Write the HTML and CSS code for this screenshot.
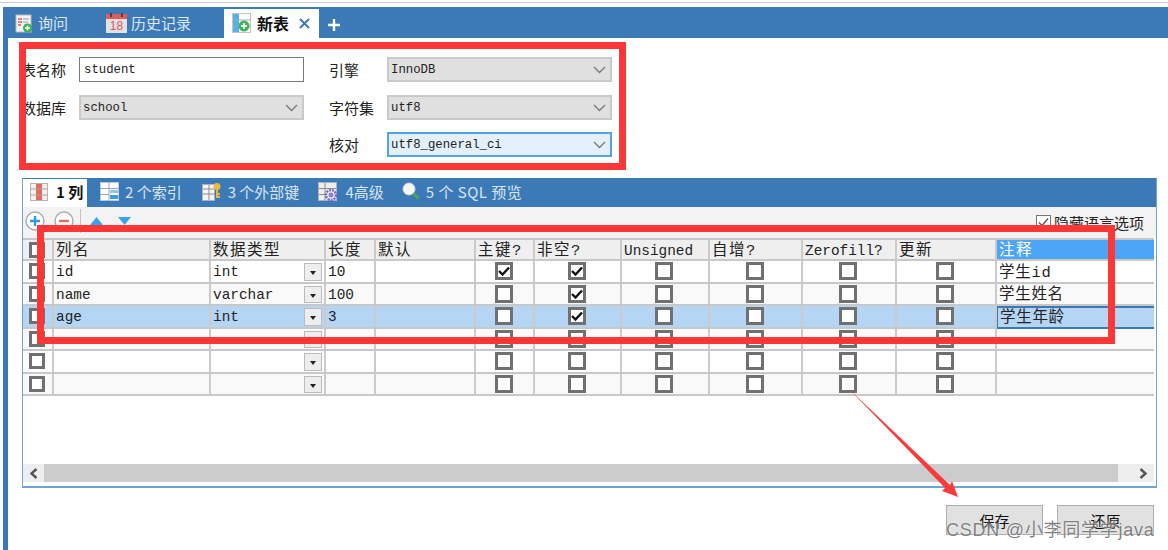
FILE: index.html
```html
<!DOCTYPE html>
<html lang="zh">
<head>
<meta charset="utf-8">
<title>新表</title>
<link rel="stylesheet" href="styles.css">
</head>
<body>
<div class="topline"></div>
<main class="window">
  <nav class="tabbar">
    <div class="tab">
      <svg class="ti" width="18" height="19" viewBox="0 0 18 19"><rect x="1" y="1" width="15" height="17" fill="#f4f4f4" stroke="#b8b8b8"/><path d="M3 5h4M3 8h4M3 11h3" stroke="#e05a5a" stroke-width="1.4"/><path d="M8 5h6M8 8h5" stroke="#999" stroke-width="1.2"/><circle cx="12.5" cy="14" r="4.5" fill="#3fae55"/><path d="M12.500 11.500v5M10 14h5" stroke="#fff" stroke-width="1.500"/></svg>
      <span>询问</span>
    </div>
    <div class="tab tab-cal">
      <svg class="ti" width="21" height="20" viewBox="0 0 21 20"><rect x="0" y="3" width="21" height="17" fill="#e2e2e2"/><rect x="0" y="1" width="21" height="5" fill="#dc5d5d"/><rect x="4" y="0" width="2" height="4" fill="#444"/><rect x="15" y="0" width="2" height="4" fill="#444"/><text x="10.500" y="17" text-anchor="middle" class="cal-num">18</text></svg>
      <span>历史记录</span>
    </div>
    <div class="tab tab-active">
      <svg class="ti" width="19" height="20" viewBox="0 0 19 20"><rect x=".5" y=".5" width="18" height="19" fill="#fff" stroke="#c4c4c4"/><path d="M1 1h6v18H1z" fill="#4db2ea"/><path d="M1 7h17M1 13h17" stroke="#a8a8a8"/><circle cx="12" cy="13" r="5.500" fill="#49b35c"/><path d="M12 10v6M9 13h6" stroke="#fff" stroke-width="1.500"/></svg>
      <b>新表</b>
      <svg class="close" width="11" height="11" viewBox="0 0 11 11"><path d="M1 1l9 9M10 1l-9 9" stroke="#3c7ab7" stroke-width="2"/></svg>
    </div>
    <svg class="plus" width="12" height="12" viewBox="0 0 12 12"><path d="M6 0v12M0 6h12" stroke="#fff" stroke-width="2.400"/></svg>
  </nav>

  <section class="form">
    <label class="lbl">表名称</label>
    <div class="ctl ctl-input">student</div>
    <label class="lbl lbl-2">引擎</label>
    <div class="ctl">InnoDB<svg class="chev" width="13" height="8" viewBox="0 0 13 8"><path d="M1 1l5.500 5.500L12 1" fill="none" stroke="#777" stroke-width="1.300"/></svg></div>
    <label class="lbl">数据库</label>
    <div class="ctl">school<svg class="chev" width="13" height="8" viewBox="0 0 13 8"><path d="M1 1l5.500 5.500L12 1" fill="none" stroke="#777" stroke-width="1.300"/></svg></div>
    <label class="lbl lbl-2">字符集</label>
    <div class="ctl">utf8<svg class="chev" width="13" height="8" viewBox="0 0 13 8"><path d="M1 1l5.500 5.500L12 1" fill="none" stroke="#777" stroke-width="1.300"/></svg></div>
    <label class="lbl lbl-2 lbl-third">核对</label>
    <div class="ctl ctl-focus">utf8_general_ci<svg class="chev" width="13" height="8" viewBox="0 0 13 8"><path d="M1 1l5.500 5.500L12 1" fill="none" stroke="#777" stroke-width="1.300"/></svg></div>
  </section>

  <section class="panel">
    <nav class="subtabs">
      <div class="sub sub-active">
        <svg width="18" height="18" viewBox="0 0 18 18"><rect x=".5" y=".5" width="17" height="17" fill="#f4f0ee" stroke="#b5b5b5"/><rect x="6" y="1" width="6" height="16" fill="#e8685c"/><path d="M1 6h16M1 12h16" stroke="#a5a5a5"/></svg>
        <b>1 列</b>
      </div>
      <div class="sub">
        <svg width="19" height="19" viewBox="0 0 19 19"><rect x=".5" y=".5" width="18" height="18" fill="#fff" stroke="#b5cbe0"/><path d="M0 6.500h19M0 12.500h9M9 0v19" stroke="#9aa8b5"/><rect x="10" y="8" width="8" height="3" fill="#8fc7ee"/><rect x="10" y="13" width="8" height="4" fill="#3f9be0"/></svg>
        <span>2 个索引</span>
      </div>
      <div class="sub">
        <svg width="20" height="19" viewBox="0 0 20 19"><rect x=".5" y="2.500" width="12" height="16" fill="#f4f4f4" stroke="#a9b4bf"/><path d="M1 7h12M1 12h12M7 3v15" stroke="#8d8d8d"/><circle cx="15" cy="4.500" r="3.500" fill="#e9b93a"/><path d="M15 7v9M15 12h3M15 15h3" stroke="#e9b93a" stroke-width="2"/></svg>
        <span>3 个外部键</span>
      </div>
      <div class="sub sub-adv">
        <svg width="21" height="20" viewBox="0 0 21 20"><rect x=".5" y=".5" width="18" height="18" fill="#eee" stroke="#a9b4bf"/><path d="M1 6.500h17M1 12.500h6M7 1v17" stroke="#8d8d8d"/><circle cx="13" cy="13" r="5" fill="none" stroke="#7668c4" stroke-width="2.400" stroke-dasharray="2 1"/><circle cx="13" cy="13" r="2.500" fill="#8d80d6"/></svg>
        <span>4高级</span>
      </div>
      <div class="sub">
        <svg width="18" height="19" viewBox="0 0 18 19"><circle cx="7" cy="7" r="6" fill="#f6f6f6"/><circle cx="7" cy="7" r="6" fill="none" stroke="#d4d4d4"/><path d="M11.500 11.500l5 5" stroke="#4aa84f" stroke-width="3"/></svg>
        <span class="sub-sql">5 个 SQL 预览</span>
      </div>
    </nav>

    <div class="toolbar">
      <svg width="20" height="20" viewBox="0 0 20 20"><circle cx="10" cy="10" r="9" fill="#fff" stroke="#aaa" stroke-width="1.400"/><path d="M10 5v10M5 10h10" stroke="#2f9be8" stroke-width="2.400"/></svg>
      <svg width="20" height="20" viewBox="0 0 20 20"><circle cx="10" cy="10" r="9" fill="#fff" stroke="#aaa" stroke-width="1.400"/><path d="M5 10h10" stroke="#e96b5c" stroke-width="2.400"/></svg>
      <i class="sep"></i>
      <svg class="arrow-up" width="13" height="8" viewBox="0 0 13 8"><path d="M6.500 0L13 8H0z" fill="#38a3ea"/></svg>
      <svg class="arrow-down" width="13" height="8" viewBox="0 0 13 8"><path d="M0 0h13L6.500 8z" fill="#38a3ea"/></svg>
      <div class="hide-lang">
        <svg width="15" height="15" viewBox="0 0 15 15"><rect x=".5" y=".5" width="14" height="14" fill="#fff" stroke="#777"/><path d="M3 7.500l3 3 6-7" fill="none" stroke="#555" stroke-width="1.300"/></svg>
        <span>隐藏语言选项</span>
      </div>
    </div>

    <div class="grid">
      <div class="row row-head">
        <div class="cell cell-num"><i class="box box-small"></i></div>
        <div class="cell">列名</div>
        <div class="cell">数据类型</div>
        <div class="cell">长度</div>
        <div class="cell">默认</div>
        <div class="cell">主键?</div>
        <div class="cell">非空?</div>
        <div class="cell cell-lat">Unsigned</div>
        <div class="cell">自增?</div>
        <div class="cell cell-lat">Zerofill?</div>
        <div class="cell">更新</div>
        <div class="cell cell-sel">注释</div>
      </div>

      <div class="row">
        <div class="cell cell-num"><i class="box box-small"></i></div>
        <div class="cell">id</div>
        <div class="cell cell-type">int<i class="drop"></i></div>
        <div class="cell">10</div>
        <div class="cell"></div>
        <div class="cell cell-c"><i class="box"><svg width="12" height="10" viewBox="0 0 12 10"><path d="M1 5l3.500 3.500L11 1.500" fill="none" stroke="#111" stroke-width="2.400"/></svg></i></div>
        <div class="cell cell-c"><i class="box"><svg width="12" height="10" viewBox="0 0 12 10"><path d="M1 5l3.500 3.500L11 1.500" fill="none" stroke="#111" stroke-width="2.400"/></svg></i></div>
        <div class="cell cell-c"><i class="box"></i></div>
        <div class="cell cell-c"><i class="box"></i></div>
        <div class="cell cell-c"><i class="box"></i></div>
        <div class="cell cell-c"><i class="box"></i></div>
        <div class="cell cell-note">学生id</div>
      </div>

      <div class="row row-alt">
        <div class="cell cell-num"><i class="box box-small"></i></div>
        <div class="cell">name</div>
        <div class="cell cell-type">varchar<i class="drop"></i></div>
        <div class="cell">100</div>
        <div class="cell"></div>
        <div class="cell cell-c"><i class="box"></i></div>
        <div class="cell cell-c"><i class="box"><svg width="12" height="10" viewBox="0 0 12 10"><path d="M1 5l3.500 3.500L11 1.500" fill="none" stroke="#111" stroke-width="2.400"/></svg></i></div>
        <div class="cell cell-c"><i class="box"></i></div>
        <div class="cell cell-c"><i class="box"></i></div>
        <div class="cell cell-c"><i class="box"></i></div>
        <div class="cell cell-c"><i class="box"></i></div>
        <div class="cell cell-note">学生姓名</div>
      </div>

      <div class="row row-picked">
        <div class="cell cell-num"><i class="box box-small"></i></div>
        <div class="cell">age</div>
        <div class="cell cell-type">int<i class="drop"></i></div>
        <div class="cell">3</div>
        <div class="cell"></div>
        <div class="cell cell-c"><i class="box"></i></div>
        <div class="cell cell-c"><i class="box"><svg width="12" height="10" viewBox="0 0 12 10"><path d="M1 5l3.500 3.500L11 1.500" fill="none" stroke="#111" stroke-width="2.400"/></svg></i></div>
        <div class="cell cell-c"><i class="box"></i></div>
        <div class="cell cell-c"><i class="box"></i></div>
        <div class="cell cell-c"><i class="box"></i></div>
        <div class="cell cell-c"><i class="box"></i></div>
        <div class="cell cell-note cell-edit">学生年龄</div>
      </div>

      <div class="row row-alt">
        <div class="cell cell-num"><i class="box box-small"></i></div>
        <div class="cell"></div>
        <div class="cell cell-type"><i class="drop"></i></div>
        <div class="cell"></div>
        <div class="cell"></div>
        <div class="cell cell-c"><i class="box"></i></div>
        <div class="cell cell-c"><i class="box"></i></div>
        <div class="cell cell-c"><i class="box"></i></div>
        <div class="cell cell-c"><i class="box"></i></div>
        <div class="cell cell-c"><i class="box"></i></div>
        <div class="cell cell-c"><i class="box"></i></div>
        <div class="cell cell-note"></div>
      </div>

      <div class="row">
        <div class="cell cell-num"><i class="box box-small"></i></div>
        <div class="cell"></div>
        <div class="cell cell-type"><i class="drop"></i></div>
        <div class="cell"></div>
        <div class="cell"></div>
        <div class="cell cell-c"><i class="box"></i></div>
        <div class="cell cell-c"><i class="box"></i></div>
        <div class="cell cell-c"><i class="box"></i></div>
        <div class="cell cell-c"><i class="box"></i></div>
        <div class="cell cell-c"><i class="box"></i></div>
        <div class="cell cell-c"><i class="box"></i></div>
        <div class="cell cell-note"></div>
      </div>

      <div class="row row-alt">
        <div class="cell cell-num"><i class="box box-small"></i></div>
        <div class="cell"></div>
        <div class="cell cell-type"><i class="drop"></i></div>
        <div class="cell"></div>
        <div class="cell"></div>
        <div class="cell cell-c"><i class="box"></i></div>
        <div class="cell cell-c"><i class="box"></i></div>
        <div class="cell cell-c"><i class="box"></i></div>
        <div class="cell cell-c"><i class="box"></i></div>
        <div class="cell cell-c"><i class="box"></i></div>
        <div class="cell cell-c"><i class="box"></i></div>
        <div class="cell cell-note"></div>
      </div>
    </div>

    <div class="scrollbar">
      <div class="sb-btn"><svg width="9" height="11" viewBox="0 0 9 11"><path d="M7.500 1L2.500 5.500l5 4.500" fill="none" stroke="#555" stroke-width="2.400"/></svg></div>
      <div class="sb-track"></div>
      <div class="sb-btn sb-btn-end"><svg width="9" height="11" viewBox="0 0 9 11"><path d="M1.500 1l5 4.500-5 4.500" fill="none" stroke="#555" stroke-width="2.400"/></svg></div>
    </div>
  </section>

  <footer class="actions">
    <button class="btn">保存</button>
    <button class="btn">还原</button>
  </footer>
</main>

<div class="mark mark-form"></div>
<div class="mark mark-grid"></div>
<svg class="pointer" width="120" height="120" viewBox="840 385 120 120"><path d="M849 389L950 485L952 481L958 497L942 491L945 488Z" fill="#fb3a3a"/></svg>
<div class="watermark">CSDN @小李同学学java</div>
</body>
</html>
```

FILE: styles.css
```css
* { box-sizing: border-box; }

html, body {
  margin: 0;
  height: 550px;
  overflow: hidden;
  background: #fff;
}

body {
  position: relative;
  font-family: "Noto Sans CJK SC", "Liberation Sans", sans-serif;
  color: #222;
}

.topline {
  height: 1px;
  margin-top: 2px;
  background: #c9c9d6;
}

.window {
  margin: 4px 0 0 3px;
  height: 543px;
  border-left: 5px solid #3c7ab7;
}

/* top tabs */
.tabbar {
  height: 31px;
  display: flex;
  align-items: flex-end;
  padding-left: 7px;
  background: #3c7ab7;
  color: #dde7f1;
  font-size: 15px;
  line-height: 20px;
}

.tab {
  display: flex;
  align-items: center;
  gap: 5px;
  height: 29px;
  margin-right: 38px;
  padding-bottom: 1px;
  white-space: nowrap;
}

.ti { flex: none; }

.tab-cal { gap: 4px; margin-right: 33px; }
.cal-num { font: 12px "Liberation Sans", sans-serif; fill: #e2575f; }

.tab-active {
  width: 95px;
  flex: none;
  margin-right: 9px;
  padding: 0 8px 1px;
  gap: 6px;
  background: #fff;
  color: #111;
  font-size: 16px;
}

.close { margin-left: 4px; flex: none; }
.plus { margin-bottom: 7px; }

/* form */
.form {
  display: grid;
  grid-template-columns: 58px 225px 83px 225px;
  grid-auto-rows: 25px;
  row-gap: 12.5px;
  padding: 19px 0 0 13px;
  height: 140px;
  font-size: 15px;
}

.lbl { line-height: 25px; white-space: nowrap; }
.lbl-2 { padding-left: 25px; }
.lbl-third { grid-column: 3; }

.ctl {
  display: flex;
  align-items: center;
  justify-content: space-between;
  padding: 1px 4px 0 2px;
  background: #e0e0e0;
  border: 2px solid #c9c9c9;
  font: 12.3px "Liberation Mono", monospace;
  color: #222;
}

.ctl-input {
  background: #fff;
  border: 1px solid #7a7a7a;
  padding: 0 4px;
}

.ctl-focus {
  background: #e3f0fa;
  border-color: #55a2e3;
}

/* inner panel */
.panel {
  margin-left: 14px;
  width: 1135px;
  height: 310px;
  display: flex;
  flex-direction: column;
  border: 1px solid #6fa3d8;
  border-top: 0;
  border-bottom-width: 2px;
}

.subtabs {
  height: 29px;
  flex: none;
  display: flex;
  align-items: center;
  background: #3c7ab7;
  color: #d9e5f0;
  font-size: 15px;
  line-height: 20px;
}

.sub {
  display: flex;
  align-items: center;
  gap: 6px;
  margin-right: 20px;
  padding-bottom: 2px;
  white-space: nowrap;
}

.sub-adv { margin-right: 18px; margin-left: -1px; gap: 6px; }
.sub-sql { letter-spacing: .5px; }

.sub-active {
  align-self: stretch;
  width: 64px;
  margin-right: 13px;
  margin-top: 1px;
  padding-left: 7px;
  gap: 8px;
  background: #fff;
  color: #111;
}

/* toolbar */
.toolbar {
  height: 31px;
  flex: none;
  display: flex;
  align-items: center;
  gap: 9px;
  padding: 0 12px 4px 2px;
  background: #f3f3f3;
}

.sep {
  width: 1px;
  height: 24px;
  background: #c4c4c4;
  margin: 0 0 0 -3px;
}

.arrow-up { margin: 1px 0 0 0; }
.arrow-down { margin: 1px 0 0 6px; }

.hide-lang {
  margin-left: auto;
  display: flex;
  align-items: center;
  gap: 3px;
  font-size: 15px;
  padding-top: 4px;
}

/* grid */
.grid {
  flex: none;
  margin-right: 2px;
  border-top: 2px solid #c6c6c6;
  font: 14.4px/16px "Liberation Mono", "Noto Sans CJK SC", monospace;
  color: #222;
}

.row {
  display: grid;
  grid-template-columns: 31px 157px 115px 50px 100px 59px 87px 88px 93px 94px 100px 1fr;
  height: 22.5px;
  border-bottom: 2px solid #c8c8c8;
  background: #fff;
}

.row-alt { background: #f9f9f9; }
.row-picked { background: #b5d5f5; }

.row-head {
  height: 21px;
  background: #efefef;
  font-size: 15.5px;
  letter-spacing: 1.5px;
}

.cell {
  display: flex;
  align-items: center;
  padding: 2px 0 0 2px;
  border-right: 2px solid #cbcbcb;
  white-space: nowrap;
}

.row-head .cell { padding-top: 3px; }
.row-head .cell-lat { padding-top: 2px; }

.cell-num,
.row-head .cell-num { justify-content: center; padding: 0 2px 0 0; }
.cell-c { justify-content: center; padding: 0 2px 0 0; }
.cell-lat { font-size: 14.4px; letter-spacing: 0; }
.cell-note { border-right: 0; font-size: 15.5px; letter-spacing: .7px; padding-top: 3px; }

.cell-sel {
  border-right: 0;
  background: #4da6f5;
  color: #fff;
}

.cell-edit {
  border: 2px solid #3c78b5;
  border-left-width: 1px;
  border-right: 0;
  margin-bottom: -2px;
  padding-top: 1px;
}

.cell-type { position: relative; }

.drop {
  position: absolute;
  top: 2px;
  right: 2px;
  bottom: 1px;
  width: 18px;
  background: #eee;
  border: 1px solid #bbb;
}

.drop::after {
  content: "";
  position: absolute;
  left: 5px;
  top: 7px;
  border: 3px solid transparent;
  border-top: 4px solid #222;
  border-bottom: 0;
}

.box {
  display: flex;
  align-items: center;
  justify-content: center;
  width: 18px;
  height: 18px;
  background: #fff;
  border: 3px solid #707070;
}

.box-small { width: 16px; height: 16px; }

/* scrollbar */
.scrollbar {
  margin-top: auto;
  margin-bottom: 4px;
  height: 18px;
  flex: none;
  display: flex;
  margin-right: 2px;
}

.sb-btn {
  width: 21px;
  display: flex;
  align-items: center;
  justify-content: center;
  background: #eee;
}

.sb-btn-end { width: 36px; justify-content: flex-end; padding-right: 6px; }
.sb-track { flex: 1; background: #ccc; }

/* actions */
.actions {
  display: flex;
  justify-content: flex-end;
  gap: 14px;
  padding: 17px 14px 0 0;
}

.btn {
  width: 97px;
  height: 30px;
  padding: 0;
  background: #e1e1e1;
  border: 1px solid #adadad;
  font: 15px "Noto Sans CJK SC", sans-serif;
  color: #111;
}

/* annotations drawn over the screenshot */
.mark {
  position: absolute;
  border: 7px solid #fd3737;
}

.mark-form { left: 19px; top: 42px; width: 607px; height: 128px; }
.mark-grid { left: 37px; top: 225px; width: 1078px; height: 119px; }

.pointer { position: absolute; left: 840px; top: 385px; }

.watermark {
  position: absolute;
  left: 946px;
  top: 518px;
  font: 18px "Liberation Sans", "Noto Sans CJK SC", sans-serif;
  line-height: 24px;
  letter-spacing: .75px;
  white-space: nowrap;
  color: rgba(90, 90, 90, .75);
  text-shadow: 0 0 2px rgba(255, 255, 255, .9);
}
```
